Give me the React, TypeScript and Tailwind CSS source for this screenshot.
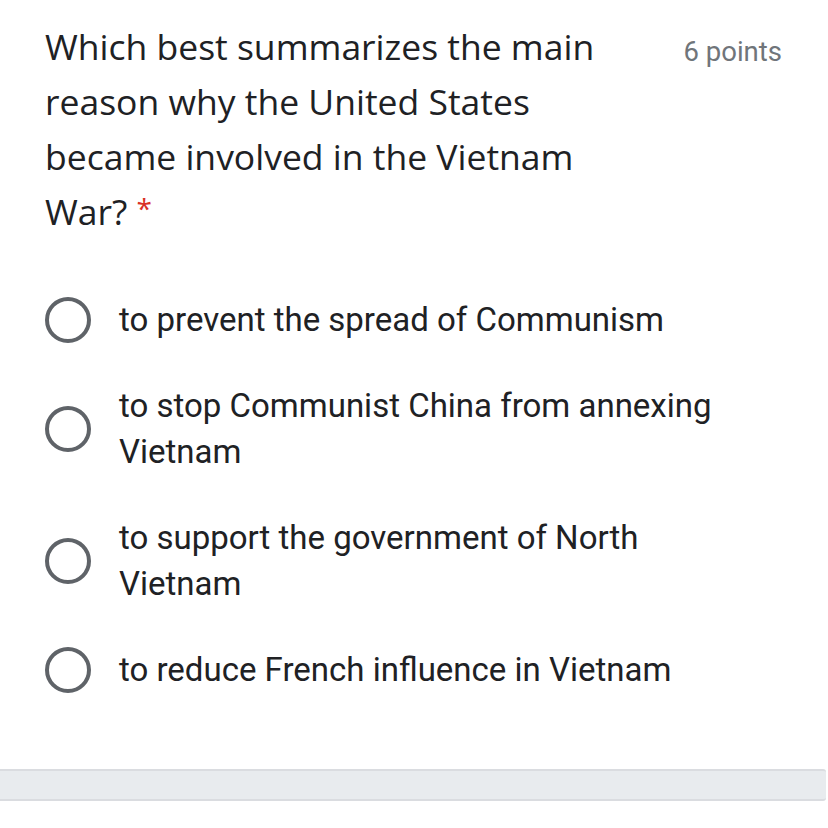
import React from 'react';

const OPTIONS = [
  'to prevent the spread of Communism',
  'to stop Communist China from annexing Vietnam',
  'to support the government of North Vietnam',
  'to reduce French influence in Vietnam',
];

const App: React.FC = () => {
  return (
    <div className="w-[828px] h-[828px] bg-white overflow-hidden" style={{ fontFamily: 'Roboto, "Open Sans", sans-serif' }}>
      <div className="pl-[45px] pr-[46px] pt-[19px]">
        <div className="flex items-start justify-between">
          <h1
            className="w-[590px] text-[35.5px] leading-[55px] text-[#202124] font-normal"
            style={{ fontFamily: '"Open Sans", Roboto, sans-serif' }}
          >
            Which best summarizes the main reason why the United States became involved in the Vietnam War?{' '}
            <span className="inline-block text-[28px] leading-none text-[#d93025] align-[6px]">*</span>
          </h1>
          <span className="pt-[12px] text-[27.5px] text-[#70757a] whitespace-nowrap">6 points</span>
        </div>

        <div className="mt-[58px] flex flex-col gap-[40px]">
          {OPTIONS.map((opt, idx) => (
            <div key={idx} className="flex items-center gap-[28px]">
              <div className="w-[46px] h-[46px] shrink-0 rounded-full border-[4px] border-[#5f6368]" />
              <span className="w-[610px] text-[33px] leading-[46px] text-[#202124]">{opt}</span>
            </div>
          ))}
        </div>
      </div>

      <div className="mt-[76px] h-[32px] bg-[#e8ebee] border-y-2 border-[#dadce0] rounded-r-[3px] mr-[2px]" />
    </div>
  );
};

export default App;
